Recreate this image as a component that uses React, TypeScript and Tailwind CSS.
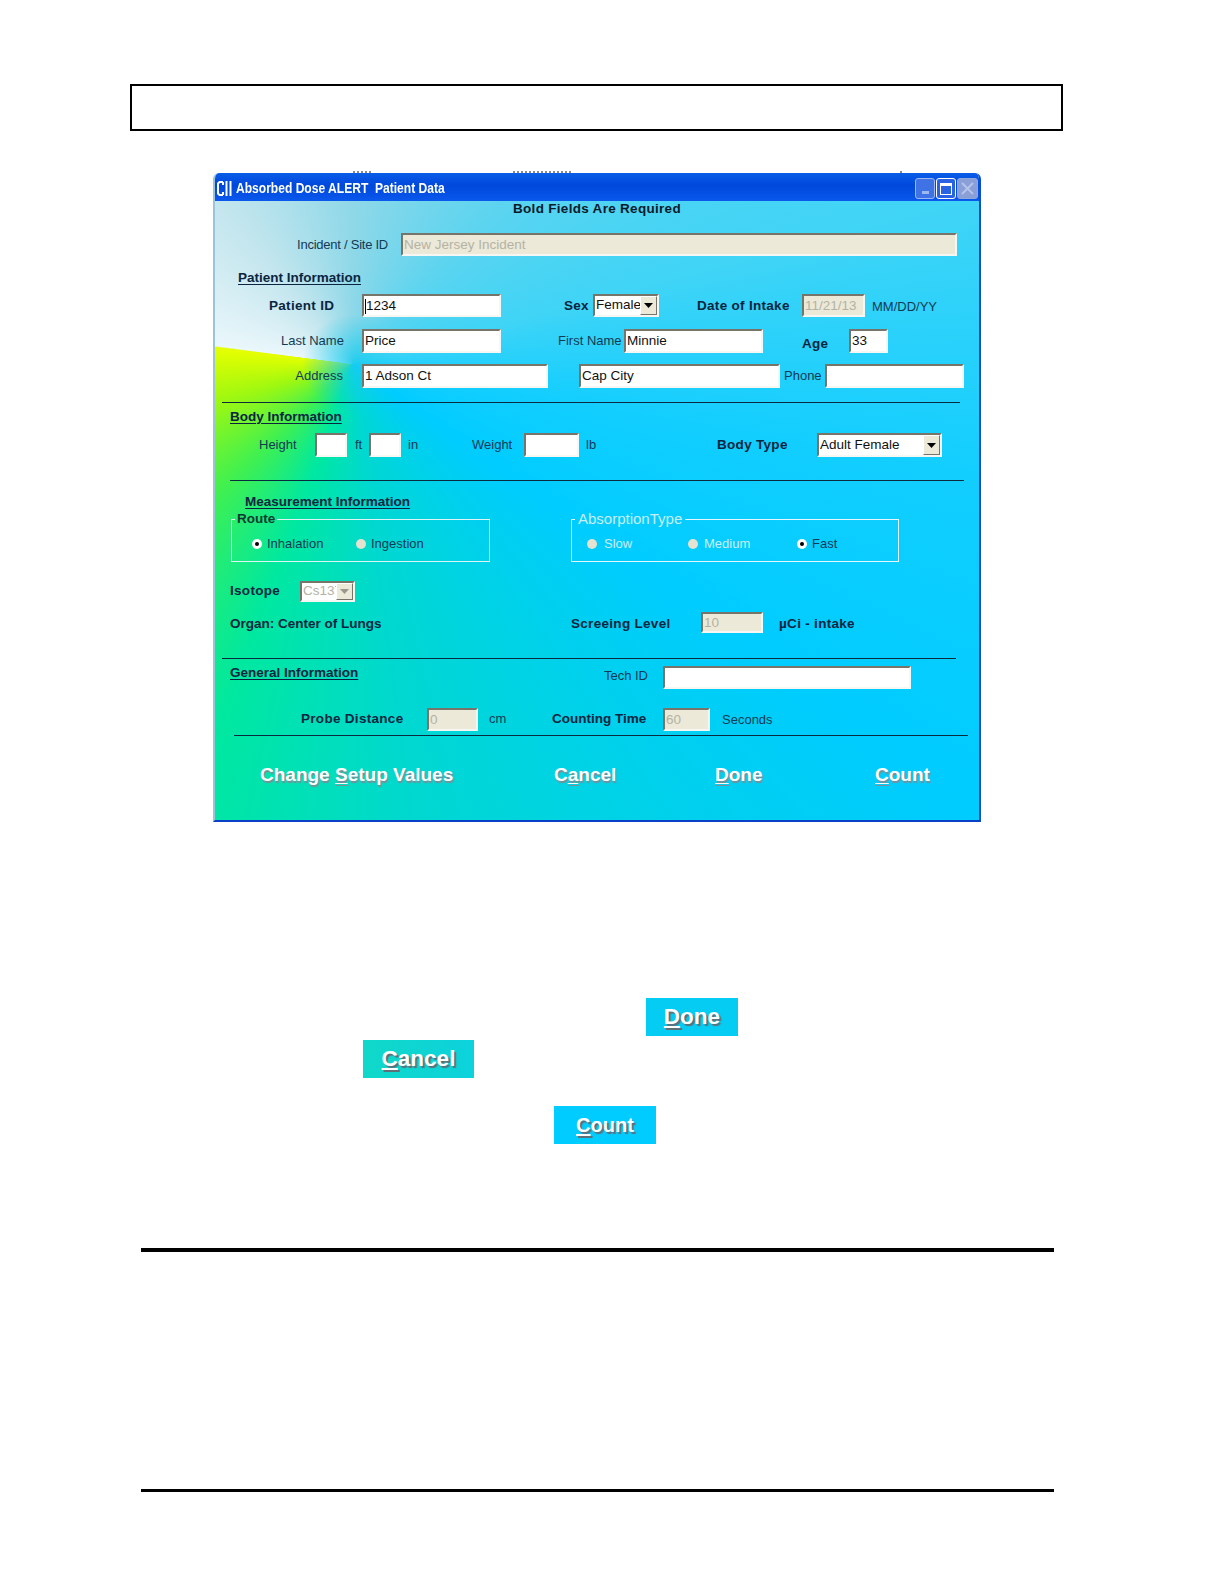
import React from 'react'

const disabledBox = 'bg-[#ece9d8] text-[#b4b2a4]'

function Field({ ml, w, value, disabled, caret }: { ml: string; w: string; value?: string; disabled?: boolean; caret?: boolean }) {
  return (
    <div
      className={`${ml} ${w} h-full shrink-0 flex items-center pl-[1px] pt-[1px] text-[13.5px] overflow-hidden border-2 border-t-[#77756a] border-l-[#77756a] border-r-[#f6f6f2] border-b-[#f6f6f2] ${
        disabled ? disabledBox : 'bg-white text-[#111]'
      }`}
    >
      {caret && <span className="w-[1px] h-[15px] bg-black shrink-0" />}
      {value}
    </div>
  )
}

function Dropdown({ ml, w, value, disabled }: { ml: string; w: string; value: string; disabled?: boolean }) {
  return (
    <div
      className={`${ml} ${w} h-full shrink-0 flex items-center justify-between pl-[1px] text-[13.5px] overflow-hidden bg-white border-2 border-t-[#77756a] border-l-[#77756a] border-r-[#f6f6f2] border-b-[#f6f6f2] ${
        disabled ? 'text-[#b4b2a4]' : 'text-[#111]'
      }`}
    >
      <span className="whitespace-nowrap min-w-0 overflow-hidden">{value}</span>
      <span className="shrink-0 w-[17px] h-full flex items-center justify-center bg-[#ece9d8] border border-t-white border-l-white border-r-[#77756a] border-b-[#77756a]">
        <svg width="9" height="5" viewBox="0 0 9 5">
          <path d="M0 0h9L4.5 5z" fill={disabled ? '#9a988c' : '#000'} />
        </svg>
      </span>
    </div>
  )
}

function Label({ ml, w, children, bold, right, extra = '' }: { ml: string; w: string; children: React.ReactNode; bold?: boolean; right?: boolean; extra?: string }) {
  return (
    <span
      className={`${ml} ${w} ${extra} shrink-0 whitespace-nowrap ${right ? 'text-right' : ''} ${
        bold ? 'font-bold text-[13.5px] tracking-[0.3px] text-[#0b2540]' : 'text-[13px] text-[#123a55]'
      }`}
    >
      {children}
    </span>
  )
}

function Radio({ ml, checked, dim }: { ml: string; checked?: boolean; dim?: boolean }) {
  return (
    <span
      className={`${ml} shrink-0 w-[10px] h-[10px] rounded-full flex items-center justify-center ${
        dim ? 'bg-[#e4e2d0]' : 'bg-white'
      }`}
    >
      {checked && <span className="w-[4px] h-[4px] rounded-full bg-black" />}
    </span>
  )
}

function Rule({ className }: { className: string }) {
  return <div className={`h-[1px] bg-[#0a2a40] ${className}`} />
}

function SectionTitle({ ml, children }: { ml: string; children: React.ReactNode }) {
  return <span className={`${ml} font-bold text-[13.5px] underline underline-offset-2 text-[#0b2540] whitespace-nowrap`}>{children}</span>
}

function ActionLabel({ ml, w, first, rest, before }: { ml: string; w: string; first: string; rest: string; before?: string }) {
  return (
    <span className={`${ml} ${w} shrink-0 whitespace-nowrap font-bold text-[19px] text-white [text-shadow:1px_2px_1px_#7a8e96]`}>
      {before}
      <span className="underline underline-offset-2">{first}</span>
      {rest}
    </span>
  )
}

function SmallButton({ className, first, rest }: { className: string; first: string; rest: string }) {
  return (
    <div className={`h-[38px] flex items-center justify-center font-bold text-white [text-shadow:2px_2px_1px_#5d6f78] ${className}`}>
      <span>
        <span className="underline underline-offset-2">{first}</span>
        {rest}
      </span>
    </div>
  )
}

export default function App() {
  return (
    <div className="w-[1224px] h-[1584px] bg-white flex flex-col overflow-hidden font-['Liberation_Sans',Arial,sans-serif]">
      <div className="ml-[130px] mt-[84px] w-[933px] h-[47px] border-2 border-black shrink-0" />

      {/* clipped text line above the dialog */}
      <svg className="mt-[40px] shrink-0" width="1224" height="2" viewBox="0 0 1224 2">
        <path d="M353 1h19M513 1h58M900 1h4" stroke="#8a8a8a" strokeWidth="2" strokeDasharray="2 2" />
      </svg>

      {/* Patient data dialog */}
      <div className="ml-[213px] w-[768px] h-[649px] shrink-0 flex flex-col rounded-t-[6px] overflow-hidden border-l-2 border-r-2 border-b-2 border-l-[#9cc4d8] border-r-[#0a4fd0] border-b-[#0a3fc8]">
        <div className="h-[28px] shrink-0 pt-[3px] flex items-center bg-[linear-gradient(180deg,#0a5ce8_0%,#0048dc_45%,#0a58ec_100%)]">
          <svg className="ml-[1px]" width="17" height="17" viewBox="0 0 17 17">
            <path d="M7 2H3.5L2 3.5v10L3.5 15H7" fill="none" stroke="#fff" strokeWidth="2" />
            <path d="M7 2v3M7 15v-3" stroke="#fff" strokeWidth="2" />
            <path d="M10.5 1v15M14.5 1v15" stroke="#fff" strokeWidth="2" />
          </svg>
          <span className="ml-[3px] font-bold text-[14.5px] text-white whitespace-pre origin-left scale-x-[0.832]">Absorbed Dose ALERT  Patient Data</span>
          <div className="ml-auto mr-[1px] flex items-center gap-[1px]">
            <span className="w-[20px] h-[21px] rounded-[3px] border border-[#9db8f0] bg-[#3f72e4] flex items-end justify-center pb-[4px]">
              <span className="w-[7px] h-[3px] bg-[#9db8f0]" />
            </span>
            <span className="w-[20px] h-[21px] rounded-[3px] border border-white bg-[#2a62e4] flex items-center justify-center">
              <span className="w-[12px] h-[12px] border border-white border-t-[3px]" />
            </span>
            <span className="w-[21px] h-[21px] rounded-[3px] border border-[#8ea8dc] bg-[#8a9fd8] flex items-center justify-center">
              <svg width="13" height="13" viewBox="0 0 13 13">
                <path d="M1 1l11 11M12 1L1 12" stroke="#b4c4ec" strokeWidth="2" />
              </svg>
            </span>
          </div>
        </div>

        <div className="flex-1 flex flex-col bg-[radial-gradient(circle_at_137px_163px,rgba(24,204,238,0.85)_0px,rgba(24,204,238,0.6)_15px,rgba(24,204,238,0)_50px),conic-gradient(from_0deg_at_137px_163px,#8fd8e8_0deg,#5ad4f0_45deg,#40d4f6_75deg,#12ceff_100deg,#00ccff_125deg,#00d8d0_172deg,#00e8a0_200deg,#40f050_226deg,#a0f810_255deg,#e6ff00_277deg,#eaf7fb_277.6deg,#c4e6ee_320deg,#8fd8e8_360deg)]">
          <div className="h-[16px] shrink-0 pt-[1px] flex items-center justify-center font-bold text-[13.5px] tracking-[0.3px] text-[#0b1a2a]">Bold Fields Are Required</div>

          <div className="mt-[16px] h-[23px] flex items-center">
            <Label ml="ml-[82px]" w="w-[91px]" right><span className="tracking-[-0.25px]">Incident / Site ID</span></Label>
            <Field ml="ml-[13px]" w="w-[556px]" value="New Jersey Incident" disabled />
          </div>

          <div className="mt-[14px] h-[16px] flex items-center">
            <SectionTitle ml="ml-[23px]">Patient Information</SectionTitle>
          </div>

          <div className="mt-[8px] h-[23px] flex items-center">
            <Label ml="ml-[54px]" w="w-[64px]" bold extra="mt-[2px]">Patient ID</Label>
            <Field ml="ml-[29px]" w="w-[139px]" value="1234" caret />
            <Label ml="ml-[63px]" w="w-[25px]" bold extra="mt-[2px]">Sex</Label>
            <Dropdown ml="ml-[4px]" w="w-[66px]" value="Female" />
            <Label ml="ml-[38px]" w="w-[92px]" bold extra="mt-[2px]">Date of Intake</Label>
            <Field ml="ml-[13px]" w="w-[63px]" value="11/21/13" disabled />
            <Label ml="ml-[7px]" w="w-[65px]" extra="mt-[2px]">MM/DD/YY</Label>
          </div>

          <div className="mt-[12px] h-[24px] flex items-center">
            <Label ml="ml-[66px]" w="w-[62px]" right>Last Name</Label>
            <Field ml="ml-[19px]" w="w-[139px]" value="Price" />
            <Label ml="ml-[57px]" w="w-[62px]" right>First Name</Label>
            <Field ml="ml-[4px]" w="w-[139px]" value="Minnie" />
            <Label ml="ml-[39px]" w="w-[26px]" bold extra="mt-[6px]">Age</Label>
            <Field ml="ml-[21px]" w="w-[39px]" value="33" />
          </div>

          <div className="mt-[11px] h-[24px] flex items-center">
            <Label ml="ml-[79px]" w="w-[49px]" right>Address</Label>
            <Field ml="ml-[19px]" w="w-[186px]" value="1 Adson Ct" />
            <Field ml="ml-[31px]" w="w-[201px]" value="Cap City" />
            <Label ml="ml-[4px]" w="w-[37px]">Phone</Label>
            <Field ml="ml-[4px]" w="w-[139px]" />
          </div>

          <Rule className="mt-[14px] ml-[7px] w-[738px]" />

          <div className="mt-[6px] h-[16px] flex items-center">
            <SectionTitle ml="ml-[15px]">Body Information</SectionTitle>
          </div>

          <div className="mt-[8px] h-[24px] flex items-center">
            <Label ml="ml-[44px]" w="w-[39px]">Height</Label>
            <Field ml="ml-[17px]" w="w-[32px]" />
            <Label ml="ml-[8px]" w="w-[7px]">ft</Label>
            <Field ml="ml-[7px]" w="w-[32px]" />
            <Label ml="ml-[7px]" w="w-[9px]">in</Label>
            <Label ml="ml-[55px]" w="w-[41px]">Weight</Label>
            <Field ml="ml-[11px]" w="w-[55px]" />
            <Label ml="ml-[7px]" w="w-[10px]">lb</Label>
            <Label ml="ml-[121px]" w="w-[72px]" bold>Body Type</Label>
            <Dropdown ml="ml-[28px]" w="w-[125px]" value="Adult Female" />
          </div>

          <Rule className="mt-[23px] ml-[15px] w-[734px]" />

          <div className="mt-[13px] h-[16px] flex items-center">
            <SectionTitle ml="ml-[30px]">Measurement Information</SectionTitle>
          </div>

          <div className="mt-[2px] h-[50px] flex">
            <fieldset className="ml-[16px] w-[259px] h-full border border-[#dff5f5]">
              <legend className="ml-[3px] px-[2px] h-[14px] leading-[14px] font-bold text-[13.5px] text-[#0b3a30]">Route</legend>
              <div className="h-[35px] flex items-center">
                <Radio ml="ml-[20px]" checked />
                <Label ml="ml-[5px]" w="w-[54px]">Inhalation</Label>
                <Radio ml="ml-[35px]" dim />
                <Label ml="ml-[5px]" w="w-[52px]">Ingestion</Label>
              </div>
            </fieldset>
            <fieldset className="ml-[81px] w-[328px] h-full border border-[#e4f7fb]">
              <legend className="ml-[3px] px-[3px] h-[14px] leading-[14px] text-[15px] text-[#c8eef4]">AbsorptionType</legend>
              <div className="h-[35px] flex items-center text-[13px] text-[#c8eef4]">
                <Radio ml="ml-[15px]" dim />
                <span className="ml-[7px] w-[28px] shrink-0">Slow</span>
                <Radio ml="ml-[56px]" dim />
                <span className="ml-[6px] w-[46px] shrink-0">Medium</span>
                <Radio ml="ml-[47px]" checked />
                <Label ml="ml-[5px]" w="w-[25px]">Fast</Label>
              </div>
            </fieldset>
          </div>

          <div className="mt-[19px] h-[21px] flex items-center">
            <Label ml="ml-[15px]" w="w-[49px]" bold>Isotope</Label>
            <Dropdown ml="ml-[21px]" w="w-[55px]" value="Cs137" disabled />
          </div>

          <div className="mt-[10px] h-[21px] flex items-center">
            <Label ml="ml-[15px]" w="w-[151px]" bold extra="mt-[3px]"><span className="tracking-normal">Organ: Center of Lungs</span></Label>
            <Label ml="ml-[190px]" w="w-[98px]" bold extra="mt-[3px]">Screeing Level</Label>
            <Field ml="ml-[32px]" w="w-[62px]" value="10" disabled />
            <Label ml="ml-[16px]" w="w-[73px]" bold extra="mt-[3px]">µCi - intake</Label>
          </div>

          <Rule className="mt-[25px] ml-[7px] w-[734px]" />

          <div className="mt-[7px] h-[23px] flex items-center">
            <span className="ml-[15px] w-[373px] shrink-0 mb-[11px]">
              <SectionTitle ml="ml-0">General Information</SectionTitle>
            </span>
            <span className="w-[45px] shrink-0 mb-[3px] text-right text-[13px] text-[#123a55] whitespace-nowrap">Tech ID</span>
            <Field ml="ml-[15px]" w="w-[248px]" />
          </div>

          <div className="mt-[19px] h-[23px] flex items-center">
            <Label ml="ml-[86px]" w="w-[102px]" bold>Probe Distance</Label>
            <Field ml="ml-[24px]" w="w-[51px]" value="0" disabled />
            <Label ml="ml-[11px]" w="w-[16px]" extra="mb-[2px]">cm</Label>
            <Label ml="ml-[47px]" w="w-[94px]" bold><span className="tracking-normal">Counting Time</span></Label>
            <Field ml="ml-[17px]" w="w-[47px]" value="60" disabled />
            <Label ml="ml-[12px]" w="w-[50px]">Seconds</Label>
          </div>

          <Rule className="mt-[4px] ml-[19px] w-[734px]" />

          <div className="mt-[27px] h-[24px] flex items-center">
            <ActionLabel ml="ml-[45px]" w="w-[195px]" before="Change " first="S" rest="etup Values" />
            <ActionLabel ml="ml-[99px]" w="w-[62px]" before="C" first="a" rest="ncel" />
            <ActionLabel ml="ml-[99px]" w="w-[47px]" first="D" rest="one" />
            <ActionLabel ml="ml-[113px]" w="w-[53px]" first="C" rest="ount" />
          </div>
        </div>
      </div>

      <SmallButton className="ml-[646px] mt-[176px] w-[92px] shrink-0 text-[22.5px] bg-[#05ccf2]" first="D" rest="one" />
      <SmallButton className="ml-[363px] mt-[4px] w-[111px] shrink-0 text-[22.5px] bg-[linear-gradient(90deg,#10d8c8,#0cd2dc)]" first="C" rest="ancel" />
      <SmallButton className="ml-[554px] mt-[28px] w-[102px] shrink-0 text-[20px] bg-[#00ccff]" first="C" rest="ount" />

      <div className="ml-[141px] mt-[104px] w-[913px] h-[4px] bg-black shrink-0" />
      <div className="ml-[141px] mt-[237px] w-[913px] h-[3px] bg-black shrink-0" />
    </div>
  )
}
